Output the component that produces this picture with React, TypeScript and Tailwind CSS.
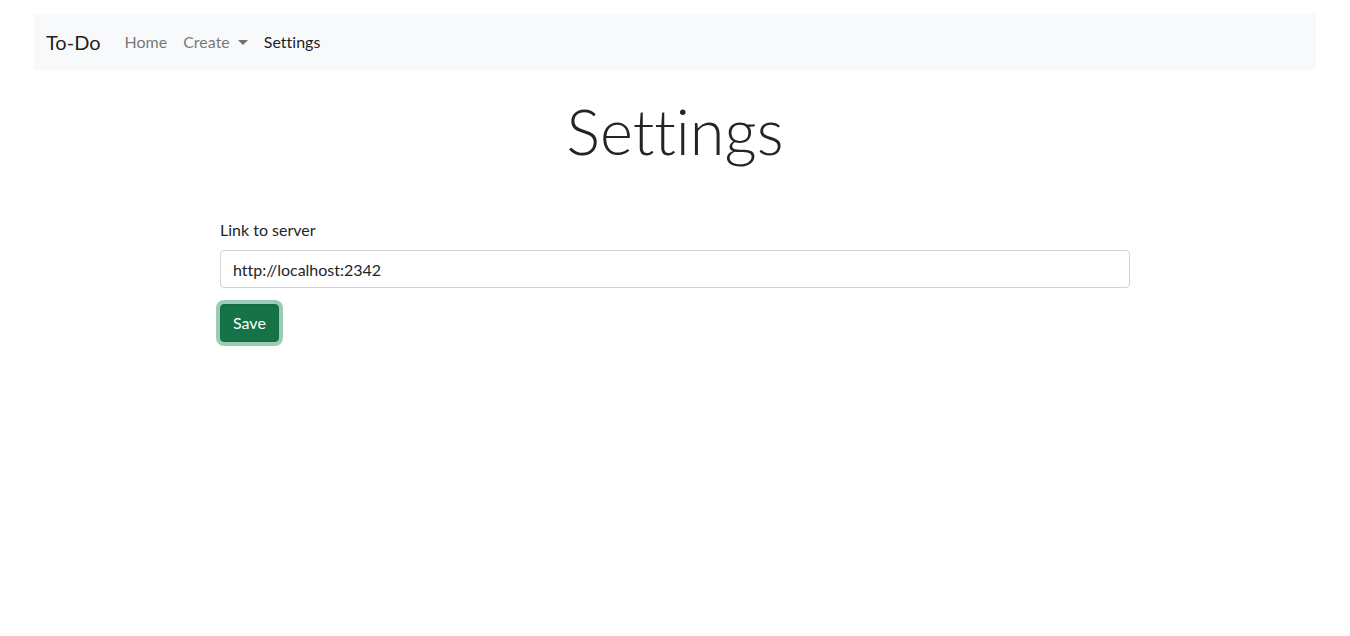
export default function App() {
  return (
    <div className="min-h-screen bg-white text-[#212529] font-['Lato','Open_Sans',sans-serif] [font-variant-ligatures:none]">
      <div className="px-[34px] pt-[14px]">
        <nav className="flex h-[56px] items-center bg-[#f8f9fa] px-3">
          <span className="mr-4 text-[20px] text-black/90">To-Do</span>
          <a className="px-2 text-[16px] text-black/55">Home</a>
          <a className="flex items-center px-2 text-[16px] text-black/55">
            Create
            <span className="ml-[8px] mt-[1px] inline-block h-0 w-0 border-x-[5px] border-t-[5px] border-x-transparent border-t-black/55" />
          </a>
          <a className="px-2 text-[16px] text-black/90">Settings</a>
        </nav>
      </div>
      <h1 className="mt-[22px] text-center text-[63px] font-light leading-[77px]">Settings</h1>
      <div className="mx-auto mt-[49px] w-[910px]">
        <label className="mb-2 block text-[16px] leading-6">Link to server</label>
        <input
          className="block h-[38px] w-full rounded-[4px] border border-[#ced4da] px-3 text-[16px] outline-none"
          defaultValue="http://localhost:2342"
        />
        <button className="mt-4 h-[38px] rounded-[4px] border border-[#146c43] bg-[#157347] px-3 text-[16px] text-white shadow-[0_0_0_4px_rgba(60,153,110,0.5)]">
          Save
        </button>
      </div>
    </div>
  );
}
